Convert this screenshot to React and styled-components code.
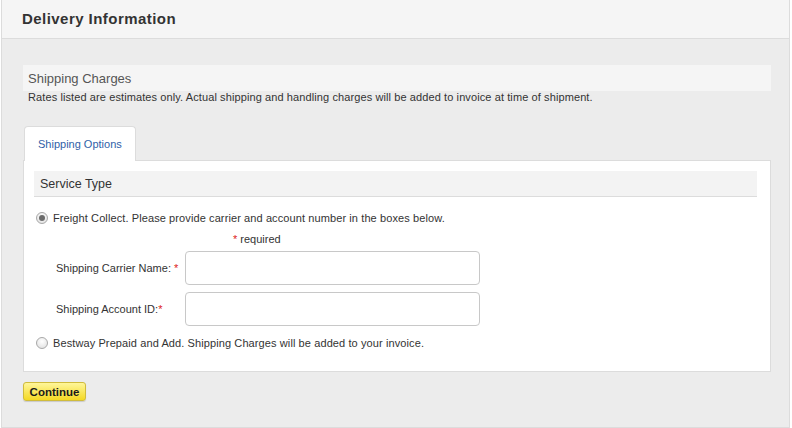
import React from "react";
import styled, { createGlobalStyle } from "styled-components";

const GlobalStyle = createGlobalStyle`
  body {
    margin: 0;
    background: #ffffff;
    font-family: "Liberation Sans", Arial, sans-serif;
    color: #333;
  }
`;

const App = () => {
  return (
    <>
      <GlobalStyle />
      <Panel>
        <Header>
          <Title>Delivery Information</Title>
        </Header>
        <Body>
          <SectionBar>
            <SectionTitle>Shipping Charges</SectionTitle>
          </SectionBar>
          <Note>
            Rates listed are estimates only. Actual shipping and handling charges will be added
            to invoice at time of shipment.
          </Note>
          <Tabs>
            <Tab>Shipping Options</Tab>
          </Tabs>
          <TabPanel>
            <SubBar>Service Type</SubBar>
            <Option>
              <Radio type="radio" name="svc" defaultChecked />
              Freight Collect. Please provide carrier and account number in the boxes below.
            </Option>
            <Required>
              <Star>*</Star> required
            </Required>
            <Field>
              <Label>
                Shipping Carrier Name: <Star>*</Star>
              </Label>
              <Input />
            </Field>
            <Field>
              <Label>
                Shipping Account ID:<Star>*</Star>
              </Label>
              <Input />
            </Field>
            <Option $last>
              <Radio type="radio" name="svc" />
              Bestway Prepaid and Add. Shipping Charges will be added to your invoice.
            </Option>
          </TabPanel>
          <Continue>Continue</Continue>
        </Body>
      </Panel>
    </>
  );
};

const Panel = styled.div`
  box-sizing: border-box;
  width: 789px;
  height: 428px;
  margin-left: 1px;
  border: 1px solid #dcdcdc;
  border-top: none;
  display: flex;
  flex-direction: column;
  background: #ececec;
`;

const Header = styled.div`
  height: 38px;
  display: flex;
  align-items: center;
  padding-left: 20px;
  background: #f5f5f5;
  border-bottom: 1px solid #dcdcdc;
`;

const Title = styled.h1`
  margin: 0 0 1px;
  font-size: 15px;
  font-weight: bold;
  letter-spacing: 0.45px;
  color: #333;
`;

const Body = styled.div`
  flex: 1;
  padding: 26px 18px 0 21px;
`;

const SectionBar = styled.div`
  width: 748px;
  height: 26px;
  display: flex;
  align-items: center;
  padding-left: 5px;
  box-sizing: border-box;
  background: #f5f5f5;
`;

const SectionTitle = styled.h2`
  margin: 0;
  font-size: 13px;
  font-weight: normal;
  color: #555;
`;

const Note = styled.div`
  font-size: 11px;
  letter-spacing: 0.1px;
  padding-left: 5px;
  color: #333;
  line-height: 13px;
`;

const Tabs = styled.div`
  display: flex;
  margin-top: 22px;
  padding-left: 1px;
`;

const Tab = styled.div`
  width: 112px;
  height: 35px;
  box-sizing: border-box;
  display: flex;
  align-items: center;
  padding-left: 13px;
  font-size: 11px;
  color: #2f5fa8;
  background: #fff;
  border: 1px solid #dcdcdc;
  border-bottom: none;
  border-radius: 4px 4px 0 0;
  margin-bottom: -1px;
  position: relative;
  z-index: 1;
`;

const TabPanel = styled.div`
  width: 748px;
  height: 212px;
  box-sizing: border-box;
  background: #fff;
  border: 1px solid #dcdcdc;
  padding: 10px 13px 0 10px;
`;

const SubBar = styled.div`
  height: 25px;
  display: flex;
  align-items: center;
  padding-left: 6px;
  font-size: 12.5px;
  color: #333;
  background: #f3f3f3;
  border-bottom: 1px solid #dcdcdc;
`;

const Option = styled.label`
  display: flex;
  align-items: center;
  gap: 5px;
  font-size: 11px;
  letter-spacing: 0.1px;
  color: #333;
  padding-left: 2px;
  margin-top: ${(p) => (p.$last ? "11px" : "15px")};
`;

const Radio = styled.input`
  appearance: none;
  margin: 0;
  width: 12px;
  height: 12px;
  border-radius: 50%;
  border: 1px solid #a8a8a8;
  background: radial-gradient(circle at 50% 35%, #ffffff 0%, #e4e4e4 80%);
  box-sizing: border-box;
  position: relative;
  &:checked::after {
    content: "";
    position: absolute;
    left: 2px;
    top: 2px;
    width: 6px;
    height: 6px;
    border-radius: 50%;
    background: #6b6b6b;
  }
`;

const Required = styled.div`
  font-size: 11px;
  margin-top: 9px;
  padding-left: 199px;
`;

const Star = styled.span`
  color: #d22;
`;

const Field = styled.div`
  display: flex;
  align-items: center;
  margin-top: 6px;
  & + & {
    margin-top: 7px;
  }
`;

const Label = styled.div`
  width: 129px;
  padding-left: 22px;
  box-sizing: content-box;
  font-size: 11px;
  color: #333;
`;

const Input = styled.input`
  width: 295px;
  height: 34px;
  box-sizing: border-box;
  border: 1px solid #c8c8c8;
  border-radius: 4px;
  margin: 0;
`;

const Continue = styled.button`
  margin-top: 10px;
  width: 63px;
  height: 19px;
  padding: 0;
  font-family: "Liberation Sans", Arial, sans-serif;
  font-size: 11.5px;
  font-weight: bold;
  color: #1a1a1a;
  border: 1px solid #d0bc3c;
  border-radius: 3px;
  background: linear-gradient(#fff69a, #f4d923);
  box-shadow: 0 1px 1px rgba(0, 0, 0, 0.15);
`;

export default App;
